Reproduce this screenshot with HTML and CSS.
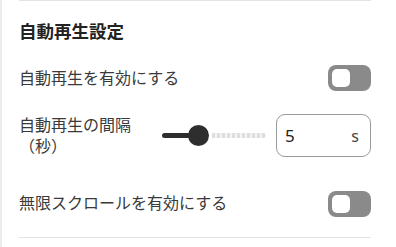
FILE: index.html
```html
<!DOCTYPE html>
<html lang="ja">
<head>
    <meta charset="UTF-8">
    <meta name="viewport" content="width=device-width, initial-scale=1.0">
    <title>自動再生設定</title>
    <link rel="stylesheet" href="styles.css">
</head>
<body>

<div class="panel">
    <section class="settings">
        <h2 class="settings-title">自動再生設定</h2>

        <div class="row row-autoplay">
            <span class="label">自動再生を有効にする</span>
            <span class="toggle"><span class="knob"></span></span>
        </div>

        <div class="row row-interval">
            <span class="label label-wrap">自動再生の間隔（秒）</span>
            <div class="slider">
                <span class="slider-fill"></span>
                <span class="slider-thumb"></span>
                <span class="slider-rest"></span>
            </div>
            <div class="number-box">
                <span class="number-value">5</span>
                <span class="number-unit">s</span>
            </div>
        </div>

        <div class="row row-infinite">
            <span class="label">無限スクロールを有効にする</span>
            <span class="toggle"><span class="knob"></span></span>
        </div>
    </section>
</div>

</body>
</html>
```

FILE: styles.css
```css
/* Page */
body {
    margin: 0;
    background-color: #fff;
    font-family: "Noto Sans", "Noto Sans CJK JP", sans-serif;
    color: #333;
}

.panel {
    height: 247px;
    border-left: 2px solid #ececec;
    padding: 0 25px 0 17px;
}

/* Settings block */
.settings {
    border-top: 1px solid #e3e3e3;
    border-bottom: 1px solid #e3e3e3;
    padding: 18px 0 20px;
}

.settings-title {
    margin: 0 0 22px;
    font-size: 17.5px;
    line-height: 24px;
    font-weight: bold;
    color: #222;
}

/* Rows */
.row {
    display: flex;
    align-items: center;
}

.row-autoplay {
    height: 26px;
}

.row-interval {
    height: 43px;
    margin-top: 23px;
}

.row-infinite {
    height: 27px;
    margin-top: 33px;
}

.label {
    flex: 1;
    font-size: 16px;
    line-height: 21px;
    color: #3a3a3a;
}

.label-wrap {
    flex: 0 0 136px;
    margin-right: 7px;
}

/* Toggle */
.toggle {
    width: 43px;
    height: 26px;
    border-radius: 8px;
    background-color: #8a8a8a;
    box-sizing: border-box;
    padding: 4px;
    display: flex;
    align-items: center;
}

.knob {
    width: 18px;
    height: 18px;
    border-radius: 5px;
    background-color: #fff;
}

/* Slider */
.slider {
    width: 104px;
    height: 21px;
    display: flex;
    align-items: center;
    margin-right: 10px;
}

.slider-fill {
    width: 28px;
    height: 5px;
    border-radius: 3px 0 0 3px;
    background-color: #2e2e2e;
}

.slider-thumb {
    width: 21px;
    height: 21px;
    border-radius: 50%;
    background-color: #2e2e2e;
    margin-left: -2px;
}

.slider-rest {
    flex: 1;
    height: 5px;
    margin-left: 3px;
    border-radius: 0 3px 3px 0;
    background: repeating-linear-gradient(90deg, #dedede 0 3px, #f4f4f4 3px 5px);
}

/* Number input */
.number-box {
    width: 95px;
    height: 43px;
    box-sizing: border-box;
    border: 1px solid #9a9a9a;
    border-radius: 9px;
    display: flex;
    align-items: center;
    justify-content: space-between;
    padding: 0 11px 0 8px;
    font-size: 17px;
    color: #222;
}

.number-unit {
    font-size: 16px;
    color: #444;
}
```
